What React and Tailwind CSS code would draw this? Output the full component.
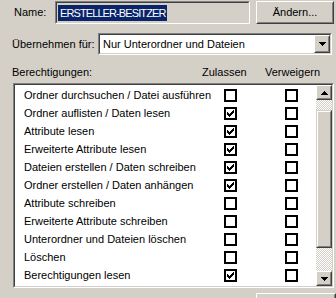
import React from "react";

const rows = [
  ["Ordner durchsuchen / Datei ausführen", false, false],
  ["Ordner auflisten / Daten lesen", true, false],
  ["Attribute lesen", true, false],
  ["Erweiterte Attribute lesen", true, false],
  ["Dateien erstellen / Daten schreiben", true, false],
  ["Ordner erstellen / Daten anhängen", true, false],
  ["Attribute schreiben", false, false],
  ["Erweiterte Attribute schreiben", false, false],
  ["Unterordner und Dateien löschen", false, false],
  ["Löschen", false, false],
  ["Berechtigungen lesen", true, false],
  ["Berechtigungen ändern", true, false],
];

const checkCols = [
  [2, 3],
  [3, 3],
  [4, 3],
  [3, 3],
  [2, 3],
  [1, 3],
  [0, 3],
];

function Box({ checked }) {
  return (
    <div className="w-[13px] h-[13px] border-2 border-black bg-white shrink-0">
      {checked && (
        <svg width="9" height="9" viewBox="0 0 9 9" shapeRendering="crispEdges" className="block">
          {checkCols.map(([y, h], i) => (
            <rect key={i} x={i + 1} y={y + 1} width="1" height={h} fill="#000" />
          ))}
        </svg>
      )}
    </div>
  );
}

function Raised({ className, children }) {
  return (
    <div className={"border border-t-white border-l-white border-r-[#404040] border-b-[#404040] bg-[#d4d0c8] " + className}>
      <div className="w-full h-full border border-t-[#d4d0c8] border-l-[#d4d0c8] border-r-[#808080] border-b-[#808080] flex items-center justify-center">
        {children}
      </div>
    </div>
  );
}

function Arrow({ up }) {
  return (
    <svg width="7" height="4" viewBox="0 0 7 4" shapeRendering="crispEdges" className="block">
      {up ? (
        <>
          <rect x="3" y="0" width="1" height="1" fill="#000" />
          <rect x="2" y="1" width="3" height="1" fill="#000" />
          <rect x="1" y="2" width="5" height="1" fill="#000" />
          <rect x="0" y="3" width="7" height="1" fill="#000" />
        </>
      ) : (
        <>
          <rect x="0" y="0" width="7" height="1" fill="#000" />
          <rect x="1" y="1" width="5" height="1" fill="#000" />
          <rect x="2" y="2" width="3" height="1" fill="#000" />
          <rect x="3" y="3" width="1" height="1" fill="#000" />
        </>
      )}
    </svg>
  );
}

export default function App() {
  return (
    <div className="w-[336px] h-[298px] overflow-hidden bg-[#d4d0c8] text-[11px] leading-[13px] text-black font-['Liberation_Sans',Arial,sans-serif]">
      {/* Name row */}
      <div className="flex pt-px">
        <div className="w-[55px] pl-[14px] h-[23px] flex items-center">Name:</div>
        <div className="w-[195px] h-[23px] border border-t-[#808080] border-l-[#808080] border-r-white border-b-white">
          <div className="w-full h-full border border-t-[#404040] border-l-[#404040] border-r-[#d4d0c8] border-b-[#d4d0c8] flex items-center pl-[1px]">
            <span className="bg-[#0a246a] text-white h-[16px] leading-[16px] px-[2px] tracking-[-0.9px] whitespace-nowrap">
              ERSTELLER-BESITZER
            </span>
          </div>
        </div>
        <Raised className="ml-[6px] w-[78px] h-[23px]">
          <span>Ändern...</span>
        </Raised>
      </div>

      {/* Übernehmen für row */}
      <div className="flex mt-[9px] h-[22px]">
        <div className="w-[98px] pl-[12px] flex items-center whitespace-nowrap">Übernehmen für:</div>
        <div className="w-[234px] h-[22px] border border-t-[#808080] border-l-[#808080] border-r-white border-b-white">
          <div className="w-full h-full border border-t-[#404040] border-l-[#404040] border-r-[#d4d0c8] border-b-[#d4d0c8] bg-white flex items-center">
            <span className="flex-1 pl-[3px] whitespace-nowrap">Nur Unterordner und Dateien</span>
            <Raised className="w-[16px] h-full">
              <Arrow up={false} />
            </Raised>
          </div>
        </div>
      </div>

      {/* Header row */}
      <div className="flex mt-[11px] h-[13px] items-center pl-[12px] whitespace-nowrap">
        <span className="w-[190px]">Berechtigungen:</span>
        <span className="w-[63px]">Zulassen</span>
        <span>Verweigern</span>
      </div>

      {/* List */}
      <div className="mt-[4px] ml-[13px] w-[321px] h-[205px] border border-t-[#808080] border-l-[#808080] border-r-white border-b-white">
        <div className="w-full h-full border border-t-[#404040] border-l-[#404040] border-r-[#d4d0c8] border-b-[#d4d0c8] bg-white flex">
          <div className="flex-1 overflow-hidden pt-px">
            {rows.map(([label, z, v]) => (
              <div key={label} className="h-[18px] flex items-center pl-[9px]">
                <span className="w-[200px] whitespace-nowrap">{label}</span>
                <Box checked={z} />
                <div className="ml-[48px]">
                  <Box checked={v} />
                </div>
              </div>
            ))}
          </div>
          <div className="w-[16px] h-full flex flex-col">
            <Raised className="w-[16px] h-[15px] shrink-0">
              <Arrow up />
            </Raised>
            <div className="h-[10px] shrink-0 bg-[repeating-conic-gradient(#d4d0c8_0%_25%,#ffffff_0%_50%)] bg-[length:2px_2px]" />
            <div className="h-[138px] shrink-0 border border-t-[#d4d0c8] border-l-[#d4d0c8] border-r-[#404040] border-b-[#404040] bg-[#d4d0c8]">
              <div className="w-full h-full border border-t-white border-l-white border-r-[#808080] border-b-[#808080]" />
            </div>
            <div className="flex-1 bg-[repeating-conic-gradient(#d4d0c8_0%_25%,#ffffff_0%_50%)] bg-[length:2px_2px]" />
            <Raised className="w-[16px] h-[15px] shrink-0">
              <Arrow up={false} />
            </Raised>
          </div>
        </div>
      </div>

      {/* Bottom button (only its top edge is visible) */}
      <div className="mt-[5px] ml-[256px]">
        <Raised className="w-[80px] h-[23px]" />
      </div>
    </div>
  );
}
